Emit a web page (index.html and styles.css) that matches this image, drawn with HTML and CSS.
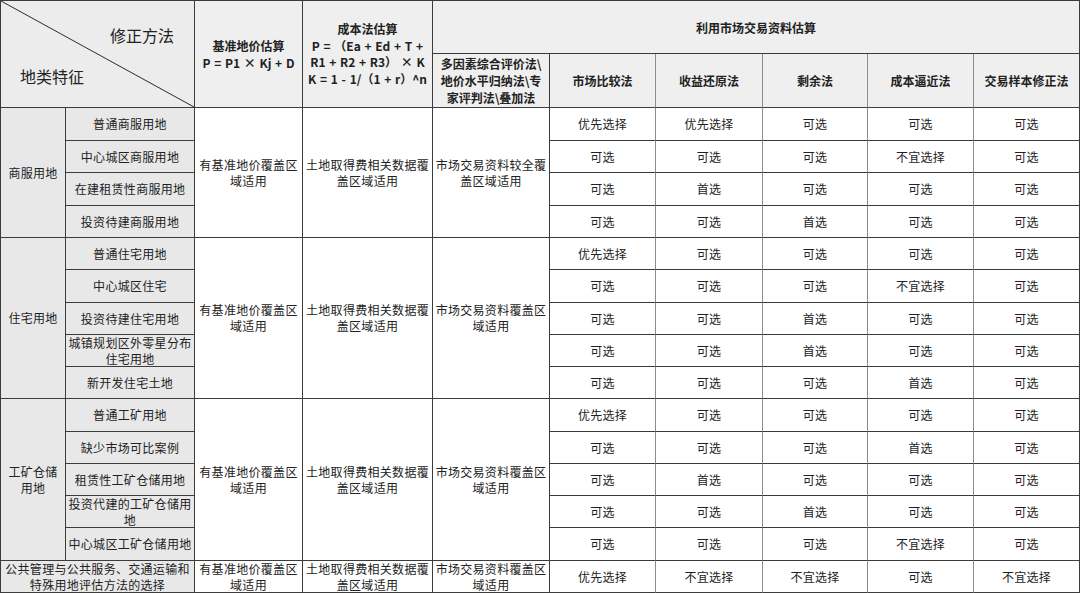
FILE: index.html
```html
<!DOCTYPE html>
<html lang="zh-CN">
<head>
<meta charset="utf-8">
<title>地类特征与修正方法</title>
<link rel="stylesheet" href="styles.css">
</head>
<body>
<div class="sheet">
  <div class="c hd diag cs2 rs2">
    <svg class="diag-line" viewBox="0 0 100 100" preserveAspectRatio="none"><line x1="0" y1="0" x2="100" y2="100" vector-effect="non-scaling-stroke"/></svg>
    <span class="diag-top">修正方法</span>
    <span class="diag-bottom">地类特征</span>
  </div>
  <div class="c hd b rs2 formula">基准地价估算<br>P = P1 × Kj + D</div>
  <div class="c hd b rs2 formula tight">成本法估算<br>P = （Ea + Ed + T +<br>R1 + R2 + R3） × K<br>K = 1 - 1/（1 + r）^n</div>
  <div class="c hd b cs6 last">利用市场交易资料估算</div>

  <div class="c hd b multi">多因素综合评价法\<br>地价水平归纳法\专<br>家评判法\叠加法</div>
  <div class="c hd b g">市场比较法</div>
  <div class="c hd b g">收益还原法</div>
  <div class="c hd b g">剩余法</div>
  <div class="c hd b g">成本逼近法</div>
  <div class="c hd b last">交易样本修正法</div>

  <!-- 商服用地 -->
  <div class="c lbl rs4">商服用地</div>
  <div class="c lbl">普通商服用地</div>
  <div class="c rs4 note">有基准地价覆盖区域适用</div>
  <div class="c rs4 note">土地取得费相关数据覆盖区域适用</div>
  <div class="c rs4 note">市场交易资料较全覆盖区域适用</div>
  <div class="c g">优先选择</div><div class="c g">优先选择</div><div class="c g">可选</div><div class="c g">可选</div><div class="c last">可选</div>

  <div class="c lbl">中心城区商服用地</div>
  <div class="c g">可选</div><div class="c g">可选</div><div class="c g">可选</div><div class="c g">不宜选择</div><div class="c last">可选</div>

  <div class="c lbl">在建租赁性商服用地</div>
  <div class="c g">可选</div><div class="c g">首选</div><div class="c g">可选</div><div class="c g">可选</div><div class="c last">可选</div>

  <div class="c lbl">投资待建商服用地</div>
  <div class="c g">可选</div><div class="c g">可选</div><div class="c g">首选</div><div class="c g">可选</div><div class="c last">可选</div>

  <!-- 住宅用地 -->
  <div class="c lbl rs5">住宅用地</div>
  <div class="c lbl">普通住宅用地</div>
  <div class="c rs5 note">有基准地价覆盖区域适用</div>
  <div class="c rs5 note">土地取得费相关数据覆盖区域适用</div>
  <div class="c rs5 note">市场交易资料覆盖区域适用</div>
  <div class="c g">优先选择</div><div class="c g">可选</div><div class="c g">可选</div><div class="c g">可选</div><div class="c last">可选</div>

  <div class="c lbl">中心城区住宅</div>
  <div class="c g">可选</div><div class="c g">可选</div><div class="c g">可选</div><div class="c g">不宜选择</div><div class="c last">可选</div>

  <div class="c lbl">投资待建住宅用地</div>
  <div class="c g">可选</div><div class="c g">可选</div><div class="c g">首选</div><div class="c g">可选</div><div class="c last">可选</div>

  <div class="c lbl">城镇规划区外零星分布住宅用地</div>
  <div class="c g">可选</div><div class="c g">可选</div><div class="c g">首选</div><div class="c g">可选</div><div class="c last">可选</div>

  <div class="c lbl">新开发住宅土地</div>
  <div class="c g">可选</div><div class="c g">可选</div><div class="c g">可选</div><div class="c g">首选</div><div class="c last">可选</div>

  <!-- 工矿仓储用地 -->
  <div class="c lbl rs5">工矿仓储<br>用地</div>
  <div class="c lbl">普通工矿用地</div>
  <div class="c rs5 note">有基准地价覆盖区域适用</div>
  <div class="c rs5 note">土地取得费相关数据覆盖区域适用</div>
  <div class="c rs5 note">市场交易资料覆盖区域适用</div>
  <div class="c g">优先选择</div><div class="c g">可选</div><div class="c g">可选</div><div class="c g">可选</div><div class="c last">可选</div>

  <div class="c lbl">缺少市场可比案例</div>
  <div class="c g">可选</div><div class="c g">可选</div><div class="c g">可选</div><div class="c g">首选</div><div class="c last">可选</div>

  <div class="c lbl">租赁性工矿仓储用地</div>
  <div class="c g">可选</div><div class="c g">首选</div><div class="c g">可选</div><div class="c g">可选</div><div class="c last">可选</div>

  <div class="c lbl">投资代建的工矿仓储用地</div>
  <div class="c g">可选</div><div class="c g">可选</div><div class="c g">首选</div><div class="c g">可选</div><div class="c last">可选</div>

  <div class="c lbl">中心城区工矿仓储用地</div>
  <div class="c g">可选</div><div class="c g">可选</div><div class="c g">可选</div><div class="c g">不宜选择</div><div class="c last">可选</div>

  <!-- 公共管理 -->
  <div class="c lbl cs2">公共管理与公共服务、交通运输和特殊用地评估方法的选择</div>
  <div class="c note">有基准地价覆盖区域适用</div>
  <div class="c note">土地取得费相关数据覆盖区域适用</div>
  <div class="c note">市场交易资料覆盖区域适用</div>
  <div class="c g">优先选择</div><div class="c g">不宜选择</div><div class="c g">不宜选择</div><div class="c g">可选</div><div class="c last">不宜选择</div>
</div>
</body>
</html>
```

FILE: styles.css
```css
html, body {
  margin: 0;
  padding: 0;
  background: #ffffff;
}

.sheet {
  display: grid;
  width: 1080px;
  height: 593px;
  box-sizing: border-box;
  grid-template-columns: 65px 129px 108px 130px 117px 106px 107px 105px 106px 106px;
  grid-template-rows: 53px 54px 33px 32px 33px 32px 32px 33px 32px 32px 32px 33px 32px 32px 32px 33px 32px;
  border-left: 1px solid #3a3a3a;
  border-top: 1px solid #3a3a3a;
  font-family: "Noto Sans CJK SC", "Noto Sans", sans-serif;
  font-size: 12px;
  color: #222222;
}

.c {
  box-sizing: border-box;
  border-right: 1px solid #3c3c3c;
  border-bottom: 1px solid #3c3c3c;
  display: flex;
  align-items: center;
  justify-content: center;
  text-align: center;
  line-height: 16px;
  letter-spacing: 0.3px;
  padding: 0 1px;
  overflow: hidden;
}

.g {
  border-right-color: #8c8c8c;
}

.hd {
  background: #efefef;
}

.lbl {
  background: #e8e8e8;
}

.b {
  font-weight: 700;
  letter-spacing: 0;
  line-height: 17px;
}

.formula {
  white-space: nowrap;
  word-spacing: 1px;
}

.tight {
  line-height: 16.5px;
}

.note {
  padding: 0;
}

.cs2 { grid-column: span 2; }
.cs6 { grid-column: span 6; }
.rs2 { grid-row: span 2; }
.rs4 { grid-row: span 4; }
.rs5 { grid-row: span 5; }

.diag {
  position: relative;
  display: block;
  background: #ececec;
  padding: 0;
  text-align: left;
  font-size: 16px;
  line-height: 20px;
  letter-spacing: 0;
}

.diag-line {
  position: absolute;
  left: 0;
  top: 0;
  width: 100%;
  height: 100%;
}

.diag-line line {
  stroke: #2a2a2a;
  stroke-width: 1;
}

.diag-top {
  position: absolute;
  left: 109px;
  top: 24px;
}

.diag-bottom {
  position: absolute;
  left: 19px;
  top: 65px;
}
```
